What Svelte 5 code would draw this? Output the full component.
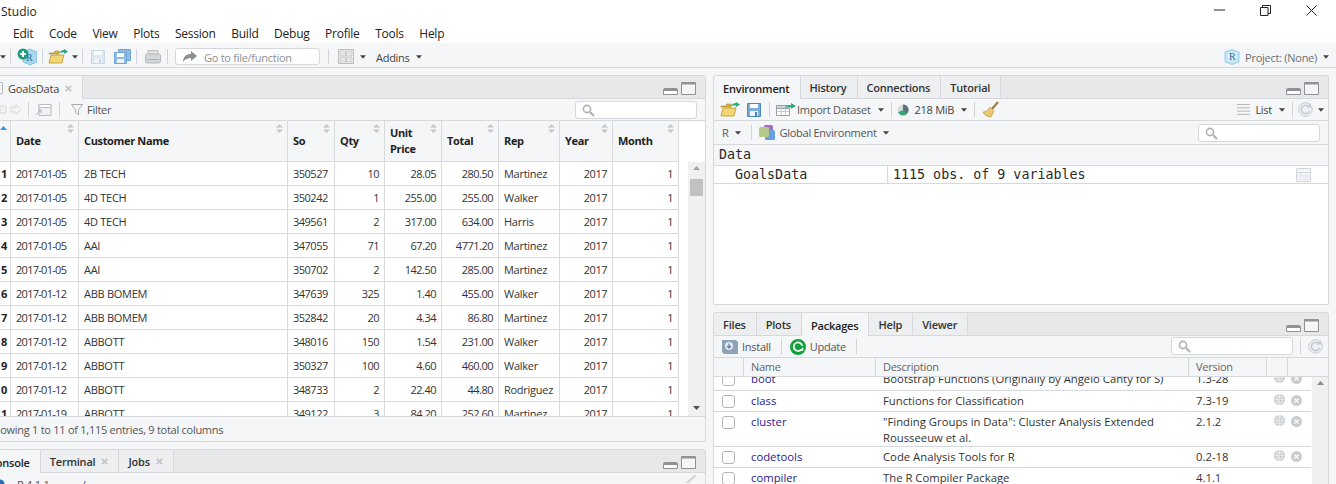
<script>
  const menus = ['Edit','Code','View','Plots','Session','Build','Debug','Profile','Tools','Help'];
  const cols = ['Date','Customer Name','So','Qty','Unit Price','Total','Rep','Year','Month'];
  const rows = [
    [1,'2017-01-05','2B TECH','350527','10','28.05','280.50','Martinez'],
    [2,'2017-01-05','4D TECH','350242','1','255.00','255.00','Walker'],
    [3,'2017-01-05','4D TECH','349561','2','317.00','634.00','Harris'],
    [4,'2017-01-05','AAI','347055','71','67.20','4771.20','Martinez'],
    [5,'2017-01-05','AAI','350702','2','142.50','285.00','Martinez'],
    [6,'2017-01-12','ABB BOMEM','347639','325','1.40','455.00','Walker'],
    [7,'2017-01-12','ABB BOMEM','352842','20','4.34','86.80','Martinez'],
    [8,'2017-01-12','ABBOTT','348016','150','1.54','231.00','Walker'],
    [9,'2017-01-12','ABBOTT','350327','100','4.60','460.00','Walker'],
    [10,'2017-01-12','ABBOTT','348733','2','22.40','44.80','Rodriguez'],
    [11,'2017-01-19','ABBOTT','349122','3','84.20','252.60','Martinez']
  ];
  const pkgs = [
    {n:'boot',d:['Bootstrap Functions (Originally by Angelo Canty for S)'],v:'1.3-28',k:'clip'},
    {n:'class',d:['Functions for Classification'],v:'7.3-19',k:''},
    {n:'cluster',d:['"Finding Groups in Data": Cluster Analysis Extended','Rousseeuw et al.'],v:'2.1.2',k:'tall'},
    {n:'codetools',d:['Code Analysis Tools for R'],v:'0.2-18',k:''},
    {n:'compiler',d:['The R Compiler Package'],v:'4.1.1',k:'noicons'}
  ];
</script>

{#snippet caret()}<svg class="caret" width="6" height="4" viewBox="0 0 7 4"><path d="M0 0h7L3.500 4z" fill="#444"/></svg>{/snippet}
{#snippet sep()}<span class="sep"></span>{/snippet}
{#snippet xicon()}<svg class="x" width="7" height="7" viewBox="0 0 7 7"><path d="M.8.800l5.400 5.400M6.200.800L.8 6.200" stroke="#c2c5c8" stroke-width="1.700"/></svg>{/snippet}
{#snippet openIcon()}
  <svg width="20" height="15" viewBox="0 0 20 15"><path d="M1 4h5l1-2h4v3H1z" fill="#d9b44a" stroke="#b08f30" stroke-width=".7"/><path d="M1 14l2-8h13l-2 8z" fill="#f3d777" stroke="#b9952f" stroke-width=".8"/><path d="M11 4c1-2 3-3 5-3V0l4 2.500L16 5V3.500c-2 0-4 0-5 .5z" fill="#2fa87c"/></svg>
{/snippet}
{#snippet saveIcon(c, s)}
  <svg width="14" height="14" viewBox="0 0 14 14"><path d="M.5.500h13v13H.5z" fill={c} stroke={s}/><path d="M3 1h8v4H3z" fill="#fff"/><path d="M3 8h8v5H3z" fill="#eef3f8"/><path d="M8 9h2v4H8z" fill={s}/></svg>
{/snippet}
{#snippet search()}
  <svg class="mag" width="13" height="13" viewBox="0 0 13 13"><circle cx="5" cy="5" r="3.600" fill="none" stroke="#aeb2b5" stroke-width="1.600"/><path d="M8 8l4 4" stroke="#aeb2b5" stroke-width="2.200"/></svg>
{/snippet}
{#snippet paneBtns()}
  <div class="panebtns">
    <svg width="33" height="13" viewBox="0 0 33 13"><path d="M.5 7.500c0-.7.500-1 1-1h12c.5 0 1 .3 1 1v5H.5z" fill="#fff" stroke="#8e9296"/><path d="M1 7h13v2H1z" fill="#8e9296"/><path d="M18.500.5h14v12h-14z" fill="#f4f6f8" stroke="#8e9296"/><path d="M19 1h13v1.500H19z" fill="#8e9296"/></svg>
  </div>
{/snippet}
{#snippet refresh()}
  <svg width="15" height="15" viewBox="0 0 15 15"><circle cx="7.500" cy="7.500" r="6.800" fill="#eef1f5" stroke="#c3cad3"/><path d="M11 5A4.200 4.200 0 1 0 11.500 9" fill="none" stroke="#c3cad3" stroke-width="1.600"/><path d="M8.500 5.500h4.500V1z" fill="#c3cad3"/></svg>
{/snippet}
{#snippet sortIcon()}
  <svg class="sort" width="7" height="9" viewBox="0 0 7 9"><path d="M3.500 0L7 3.500H0zM3.500 9L0 5.500h7z" fill="#c4c6c8"/></svg>
{/snippet}
{#snippet rcube(sz)}
  <svg width={sz} height={sz} viewBox="0 0 16 16"><path d="M1 3l7-2.500L15 3v10l-7 2.500L1 13z" fill="#bfe3f3" stroke="#8fc8e4" stroke-width=".8"/><path d="M3.500 3.500h9v8.500h-9z" fill="#d9f0fa"/><text x="5" y="11" class="cube-r">R</text></svg>
{/snippet}

<div class="app">
  <div class="title">
    <span class="tname">Studio</span>
    <div class="winbtns">
      <svg width="11" height="2" viewBox="0 0 11 2"><path d="M0 1h11" stroke="#222"/></svg>
      <svg width="11" height="11" viewBox="0 0 11 11"><path d="M.5 2.500h7.500v8H.5zM2.500 2.500V.5h8v8H8" fill="none" stroke="#222"/></svg>
      <svg width="11" height="11" viewBox="0 0 11 11"><path d="M.5.500l10 10M10.500.500l-10 10" stroke="#222"/></svg>
    </div>
  </div>
  <nav class="menu">{#each menus as m}<span>{m}</span>{/each}</nav>

  <div class="maintb">
    <span class="tb-lead">{@render caret()}</span>
    {@render sep()}
    <svg class="i-new" width="20" height="18" viewBox="0 0 20 18"><path d="M6 4l7-3 7 3v10l-7 3-7-3z" fill="#a9d8ee" stroke="#6fb5d6" stroke-width=".7"/><text x="9" y="13" class="cube-r">R</text><circle cx="6" cy="6" r="5.500" fill="#1f9c7f"/><path d="M6 3v6M3 6h6" stroke="#fff" stroke-width="2"/></svg>
    {@render sep()}
    <span class="i-open">{@render openIcon()}</span>
    {@render caret()}
    {@render sep()}
    <span class="i-save">{@render saveIcon('#dce8f2','#c6d9e9')}</span>
    <svg class="i-saveall" width="17" height="15" viewBox="0 0 17 15"><path d="M4.500.500h12v11h-12z" fill="#8dbbe4" stroke="#6ea6d8"/><path d="M.5 3.500h12v11H.5z" fill="#8dbbe4" stroke="#6ea6d8"/><path d="M3 4h7v4H3z" fill="#fff"/><path d="M3 10h7v4H3z" fill="#eef3f8"/></svg>
    {@render sep()}
    <svg class="i-print" width="16" height="14" viewBox="0 0 16 14"><path d="M3 .5h10v5H3z" fill="#e8e0cf" stroke="#bfc3c7"/><path d="M.5 5.500c0-1 1-1.500 2-1.500h11c1 0 2 .5 2 1.500v6c0 1-1 1.500-2 1.500h-11c-1 0-2-.5-2-1.500z" fill="#d3d7db" stroke="#b5b9bd"/><path d="M2 9h12v1H2z" fill="#aeb2b6"/></svg>
    {@render sep()}
    <div class="goto">
      <svg width="14" height="11" viewBox="0 0 14 11"><path d="M8 0l6 5-6 5V7C5 7 2 8 0 11c0-5 3-8 8-8z" fill="#8a8f94"/></svg>
      <span>Go to file/function</span>
    </div>
    {@render sep()}
    <svg class="i-grid" width="16" height="15" viewBox="0 0 16 15"><path d="M.5.500h15v14H.5z" fill="#f4f6f8" stroke="#b9bcbf"/><path d="M2 2h5.500v5H2zM8.500 2H14v5H8.500zM2 8h5.500v5H2zM8.500 8H14v5H8.500z" fill="#e4e6e8" stroke="#b9bcbf" stroke-width=".6"/></svg>
    <span class="grid-caret">{@render caret()}</span>
    <span class="addins">Addins</span>
    {@render caret()}
    <div class="project">
      {@render rcube(16)}
      <span>Project: (None)</span>
      {@render caret()}
    </div>
  </div>

  <div class="workspace">
    <div class="leftcol">
      <section class="pane editor">
        <div class="tabs">
          <div class="tab active first">
            <svg class="doc" width="9" height="12" viewBox="0 0 9 12"><path d="M.5.500h8v11h-8z" fill="#fff" stroke="#b9bcbf"/><path d="M1 4h7M1 7h7M4 1v10" stroke="#c9ccd0" stroke-width=".7"/></svg>
            <span class="tabname">GoalsData</span>
            {@render xicon()}
          </div>
          {@render paneBtns()}
        </div>
        <div class="toolbar tb-view">
          <svg class="arrows" width="21" height="11" viewBox="0 0 21 11"><path d="M0 2h6v7H0zM11 3h5V.5L21 5.500 16 10.500V8h-5z" fill="#f2f4f6" stroke="#d5d8da"/></svg>
          {@render sep()}
          <svg class="pop" width="16" height="12" viewBox="0 0 16 12"><path d="M3 .5h12v11H3z" fill="#eef2f6" stroke="#b9bcbf"/><path d="M3 .5h12v3H3z" fill="#fff" stroke="#b9bcbf"/><path d="M0 11l5-5M2 6h3v3" fill="none" stroke="#aeb2b5"/></svg>
          {@render sep()}
          <svg class="funnel" width="12" height="11" viewBox="0 0 12 11"><path d="M.5.500h11L7.500 5.500v5l-3-2v-3z" fill="none" stroke="#a8acb0"/></svg>
          <span class="filter">Filter</span>
          <div class="searchbox sb-view">{@render search()}</div>
        </div>
        <div class="tablewrap">
          <div class="tablemain">
            <div class="grid-row head">
              <div class="cell idx"><svg width="7" height="4" viewBox="0 0 7 4" class="asc"><path d="M3.500 0L7 4H0z" fill="#2d9be8"/></svg></div>
              {#each cols as c}
                <div class="cell hcell"><span>{c}</span>{@render sortIcon()}</div>
              {/each}
            </div>
            {#each rows as r}
              <div class="grid-row body">
                <div class="cell idx">{r[0]}</div>
                <div class="cell dt">{r[1]}</div>
                <div class="cell">{r[2]}</div>
                <div class="cell digits">{r[3]}</div>
                <div class="cell num">{r[4]}</div>
                <div class="cell num">{r[5]}</div>
                <div class="cell num">{r[6]}</div>
                <div class="cell">{r[7]}</div>
                <div class="cell num">2017</div>
                <div class="cell num">1</div>
              </div>
            {/each}
          </div>
          <div class="vscroll">
            <svg width="7" height="4" viewBox="0 0 7 4"><path d="M3.500 0L7 4H0z" fill="#a3a3a3"/></svg>
            <span class="thumb"></span>
            <svg class="down" width="7" height="4" viewBox="0 0 7 4"><path d="M0 0h7L3.500 4z" fill="#505050"/></svg>
          </div>
        </div>
        <div class="statusbar">Showing 1 to 11 of 1,115 entries, 9 total columns</div>
      </section>

      <section class="pane console">
        <div class="tabs">
          <div class="tab active first con">Console</div>
          <div class="tab">Terminal {@render xicon()}</div>
          <div class="tab">Jobs {@render xicon()}</div>
          {@render paneBtns()}
        </div>
        <div class="conbar">
          <svg width="10" height="10" viewBox="0 0 10 10"><circle cx="5" cy="5" r="4.500" fill="#2a6fb5"/></svg>
          <span>R 4.1.1</span>
          <span class="conpath">· ~/</span>
          <svg class="conbroom" width="12" height="8" viewBox="0 0 12 8"><path d="M11 0L2 8" stroke="#d5d8da" stroke-width="2.500"/></svg>
        </div>
      </section>
    </div>

    <div class="rightcol">
      <section class="pane envp">
        <div class="tabs">
          <div class="tab active">Environment</div>
          <div class="tab">History</div>
          <div class="tab">Connections</div>
          <div class="tab">Tutorial</div>
          {@render paneBtns()}
        </div>
        <div class="toolbar envtb">
          {@render openIcon()}
          <span class="i-envsave">{@render saveIcon('#7cadd9','#4a86bf')}</span>
          {@render sep()}
          <svg class="i-import" width="20" height="13" viewBox="0 0 20 13"><path d="M.5 2.500h13v10H.5z" fill="#fff" stroke="#9aa0a6"/><path d="M.5 2.500h13v3H.5z" fill="#cfd4da" stroke="#9aa0a6"/><path d="M5 3v9M9.500 3v9M1 8.500h12" stroke="#b5bac0" stroke-width=".7"/><path d="M9 5c1-2 3-3 6-3V0l5 3-5 3V4c-2 0-4 0-6 1z" fill="#2fa87c"/></svg>
          <span>Import Dataset</span>
          {@render caret()}
          {@render sep()}
          <svg width="12" height="12" viewBox="0 0 12 12"><circle cx="6" cy="6" r="5.500" fill="#d8dbde"/><path d="M6 6V.5A5.500 5.500 0 0 1 9.500 10.300z" fill="#5c6d7a"/><path d="M6 6l3.500 4.300A5.500 5.500 0 0 1 1 8.300z" fill="#39a678"/></svg>
          <span class="mib">218 MiB</span>
          {@render caret()}
          {@render sep()}
          <svg class="i-broom" width="17" height="17" viewBox="0 0 17 17"><path d="M16 1l-6 7" stroke="#9c7a3c" stroke-width="2"/><path d="M8 6l4 4-3 6C6 16 2 14 1 11c3 0 5-2 7-5z" fill="#e6c872" stroke="#b39340" stroke-width=".6"/></svg>
          <div class="push">
            <svg width="13" height="11" viewBox="0 0 13 11"><path d="M0 .5h13M0 3.800h13M0 7.100h13M0 10.400h13" stroke="#b5b9bd"/></svg>
            <span class="listlbl">List</span>
            {@render caret()}
            {@render sep()}
            {@render refresh()}
            {@render caret()}
          </div>
        </div>
        <div class="toolbar envtb2">
          <span>R</span>
          {@render caret()}
          {@render sep()}
          <svg class="i-genv" width="16" height="15" viewBox="0 0 16 15"><rect x="5" y="0" width="9" height="9" rx="1.500" fill="#a86cc4"/><rect x="6" y="5" width="10" height="10" rx="1.500" fill="#6b9fe0"/><rect x="0" y="2" width="10" height="10" rx="1.500" fill="#b5c98a"/></svg>
          <span class="genv">Global Environment</span>
          {@render caret()}
          <div class="searchbox sb-env">{@render search()}</div>
        </div>
        <div class="mono datahead">Data</div>
        <div class="datarow mono">
          <span class="dname">GoalsData</span>
          <span class="dval">1115 obs. of 9 variables</span>
          <svg width="15" height="14" viewBox="0 0 15 14"><path d="M1 .5h13c.3 0 .5.200.5.500v12c0 .3-.2.500-.5.500H1c-.3 0-.5-.2-.5-.500V1C.5.700.700.500 1 .500z" fill="#f4f6f8" stroke="#cfd5da"/><path d="M1 4h13v1H1z" fill="#cfd5da"/><path d="M.5 8h14M.5 11h14M5 4v10M10 4v10" stroke="#dde1e5" stroke-width=".7"/></svg>
        </div>
        <div class="whitefill"></div>
      </section>

      <section class="pane pkgp">
        <div class="tabs">
          <div class="tab">Files</div>
          <div class="tab">Plots</div>
          <div class="tab active">Packages</div>
          <div class="tab">Help</div>
          <div class="tab">Viewer</div>
          {@render paneBtns()}
        </div>
        <div class="toolbar pkgtb">
          <svg width="16" height="15" viewBox="0 0 16 15"><path d="M0 1h14l2 2v12H2l-2-2z" fill="#8da3b8"/><circle cx="7" cy="7" r="4" fill="#e5ecf2"/><path d="M7 4.500v4M5 7l2 2 2-2" fill="none" stroke="#6d8297" stroke-width="1.300"/></svg>
          <span class="pi">Install</span>
          {@render sep()}
          <svg width="16" height="16" viewBox="0 0 15 15"><circle cx="7.500" cy="7.500" r="7.500" fill="#11a13a"/><path d="M10.500 10A4 4 0 1 1 11.500 6.500" fill="none" stroke="#fff" stroke-width="1.600"/><path d="M9 11h3.500V7.500z" fill="#fff"/></svg>
          <span class="pu">Update</span>
          {@render sep()}
          <div class="pkgright">
            <div class="searchbox sb-pkg">{@render search()}</div>
            {@render sep()}
            {@render refresh()}
          </div>
        </div>
        <div class="phead">
          <span></span><span>Name</span><span>Description</span><span>Version</span><span></span><span></span>
        </div>
        <div class="pbody">
          <div class="plist">
            {#each pkgs as p}
              <div class={['prow', p.k]}>
                <span class="chk"></span>
                <span class="pname">{p.n}</span>
                <span class="pdesc">{#each p.d as l}<span>{l}</span>{/each}</span>
                <span class="pver">{p.v}</span>
                {#if p.k !== 'noicons'}
                  <svg class="globe" width="11" height="11" viewBox="0 0 11 11"><circle cx="5.500" cy="5.500" r="5.500" fill="#c9cccf"/><path d="M0 5.500h11M1 3h9M1 8h9M5.500 0v11M5.500 0C2 3 2 8 5.500 11M5.500 0C9 3 9 8 5.500 11" stroke="#f4f6f8" stroke-width=".6" fill="none"/></svg>
                  <svg class="rm" width="11" height="11" viewBox="0 0 11 11"><circle cx="5.500" cy="5.500" r="5.500" fill="#c9cccf"/><path d="M3.500 3.500l4 4M7.500 3.500l-4 4" stroke="#f8f9fa" stroke-width="1.300"/></svg>
                {/if}
              </div>
            {/each}
          </div>
          <div class="pscroll"><svg width="7" height="4" viewBox="0 0 7 4"><path d="M3.500 0L7 4H0z" fill="#8a8a8a"/></svg></div>
        </div>
      </section>
    </div>
  </div>
</div>

<style>
  :global(body) { margin: 0; overflow: hidden; }
  .app {
    width: 1336px; height: 484px; overflow: hidden; background: #f4f6f8;
    font-family: "Open Sans", "Noto Sans", sans-serif; font-size: 11px; color: #333; letter-spacing: -0.27px;
  }
  .title { height: 22px; background: #fff; display: flex; align-items: center; justify-content: space-between; }
  .tname { font-size: 12px; color: #222; padding-left: 1px; letter-spacing: 0; }
  .winbtns { display: flex; align-items: center; gap: 35px; padding-right: 19px; margin-top: -2px; }
  .menu { height: 21px; padding-top: 1px; box-sizing: border-box; background: #fff; display: flex; align-items: center; gap: 15.600px; padding-left: 13px; font-size: 12px; letter-spacing: -0.25px; color: #222; }

  .maintb { height: 25px; padding-top: 3px; box-sizing: border-box; background: #f4f6f8; border-bottom: 1px solid #d6d9dc; display: flex; align-items: center; color: #555; }
  .tb-lead { display: flex; width: 10px; }
  .sep { display: inline-block; width: 1px; height: 15px; background: #d0d4d8; flex: none; }
  .caret { flex: none; }
  .i-new { margin: 0 5px 0 6px; }
  .i-open { margin-left: 5px; margin-right: 4px; display: flex; }
  .maintb .caret { margin-right: 4px; }
  .i-save { margin: 0 9px 0 8px; display: flex; }
  .i-saveall { margin-right: 5px; }
  .i-print { margin: 0 6px 0 8px; }
  .goto {
    width: 145px; height: 17px; box-sizing: border-box; margin: 0 8px 0 7px; background: #fff;
    border: 1px solid #d6d9dc; border-radius: 3px; display: flex; align-items: center; gap: 7px; padding-left: 7px; color: #8d8f91;
  }
  .goto span, .addins, .project span { margin-top: 1px; }
  .i-grid { margin: 0 6px 0 9px; }
  .grid-caret { display: flex; margin-right: 6px; }
  .addins { margin-right: 6px; color: #444; }
  .project { margin-left: auto; display: flex; align-items: center; gap: 5px; padding-right: 7px; color: #6c6f72; }
  .project .caret { margin: 0 0 0 1px; }

  .workspace { display: flex; padding-top: 7px; height: 416px; box-sizing: border-box; }
  .leftcol { width: 724px; margin-left: -18px; flex: none; display: flex; flex-direction: column; gap: 7px; }
  .rightcol { width: 616px; margin-left: 7px; flex: none; display: flex; flex-direction: column; gap: 7px; }
  .pane { border: 1px solid #d6d9dc; border-radius: 3px 3px 0 0; box-sizing: border-box; background: #f4f6f8; overflow: hidden; }
  .editor { height: 367px; flex: none; }
  .console { flex: 1; border-bottom: 0; }
  .envp { height: 230px; flex: none; }
  .pkgp { flex: 1; border-bottom: 0; }

  .tabs { height: 22px; background: #e6e8ea; border-bottom: 1px solid #d6d9dc; display: flex; position: relative; }
  .tab {
    display: flex; align-items: center; gap: 4px; font-weight: 600; padding: 1px 10px 0 9px; color: #333; letter-spacing: -0.2px;
    border-right: 1px solid #d6d9dc; background: #eceef0;
  }
  .tab.active { background: #f4f6f8; margin-bottom: -1px; color: #222; }
  .first { padding-left: 11px; }
  .first .doc { margin-right: 1px; }
  .tabname { font-weight: 400; color: #444; }
  .x { flex: none; margin-left: 2px; }
  .panebtns { position: absolute; right: 9px; top: 6px; display: flex; }

  .toolbar { display: flex; align-items: center; color: #555; background: #f4f6f8; border-bottom: 1px solid #d6d9dc; box-sizing: border-box; }
  .tb-view { height: 22px; padding-left: 17px; position: relative; }
  .arrows { margin-right: 7px; }
  .pop { margin: 0 7px; }
  .funnel { margin-left: 11px; }
  .filter { margin-left: 4px; }
  .searchbox { background: #fff; border: 1px solid #d6d9dc; border-radius: 3px; box-sizing: border-box; height: 18px; width: 122px; display: flex; align-items: center; padding-left: 6px; }
  .sb-view { position: absolute; right: 8px; top: 2px; }

  .tablewrap { display: flex; height: 296px; background: #fff; overflow: hidden; border-bottom: 1px solid #d6d9dc; box-sizing: border-box; }
  .tablemain { width: 696px; flex: none; }
  .grid-row { display: grid; grid-template-columns: 28px 68px 209px 47px 50px 57px 57px 61px 53px 66px; }
  .cell { border-right: 1px solid #d8dadc; border-bottom: 1px solid #d8dadc; padding: 0 5px; box-sizing: border-box; display: flex; align-items: center; min-width: 0; white-space: nowrap; }
  .digits, .num { letter-spacing: -0.5px; }
  .dt { letter-spacing: -0.72px; }
  .head { height: 41px; background: #f4f6f8; }
  .body { height: 24px; }
  .hcell { font-weight: 700; color: #222; position: relative; white-space: normal; line-height: 16px; padding-right: 14px; letter-spacing: -0.35px; }
  .sort { position: absolute; right: 4px; top: 3px; }
  .idx { padding: 0 3px 0 0; justify-content: flex-end; font-weight: 700; color: #222; }
  .head .idx { align-items: flex-start; padding-top: 5px; }
  .asc { display: block; }
  .num { justify-content: flex-end; }
  .vscroll { margin: 41px 0 0 9px; width: 17px; background: #f0f0f0; display: flex; flex-direction: column; align-items: center; padding-top: 4px; box-sizing: border-box; }
  .thumb { width: 13px; height: 17px; background: #c1c1c1; margin-top: 9px; }
  .down { margin-top: auto; margin-bottom: 6px; }
  .statusbar { height: 24px; padding-left: 5px; display: flex; align-items: center; color: #555; }

  .con { padding-left: 6px; }
  .conbar { height: 24px; display: flex; padding: 4px 0 0 12px; align-items: flex-start; color: #555; box-sizing: border-box; position: relative; white-space: nowrap; }
  .conbar svg:first-child { margin-top: 2px; margin-right: 12px; }
  .conpath { margin-left: 21px; }
  .conbroom { position: absolute; right: 8px; top: 2px; }

  .envtb { height: 22px; padding: 0 4px 0 6px; gap: 5px; }
  .envtb .caret { margin: 0 2px; }
  .i-envsave { display: flex; margin: 0 3px 0 2px; }
  .i-import { margin: 0 -4px 0 1px; }
  .mib { margin-left: 1px; color: #444; }
  .i-broom { margin-left: 2px; }
  .push { margin-left: auto; display: flex; align-items: center; gap: 5px; }
  .push .caret:last-child { margin: 0; }
  .listlbl { color: #444; }
  .envtb2 { height: 24px; padding-left: 8px; gap: 5px; position: relative; }
  .i-genv { margin-left: 2px; }
  .envtb2 .caret { margin: 0 5px 0 1px; }
  .sb-env { position: absolute; right: 8px; top: 3px; }
  .mono { font-family: "DejaVu Sans Mono", monospace; font-size: 13.330px; letter-spacing: 0; color: #2a2a2a; }
  .datahead { height: 21px; padding: 0 0 2px 5px; display: flex; align-items: center; border-bottom: 1px solid #d6d9dc; box-sizing: border-box; }
  .datarow { height: 18px; background: #fff; border-bottom: 1px solid #d6d9dc; box-sizing: border-box; display: flex; align-items: center; }
  .dname { width: 174px; padding-left: 21px; box-sizing: border-box; border-right: 1px solid #d6d9dc; height: 100%; display: flex; align-items: center; }
  .dval { padding-left: 5px; flex: 1; }
  .datarow svg { margin-right: 17px; }
  .whitefill { height: 120px; background: #fff; }

  .pkgtb { height: 22px; padding-left: 8px; position: relative; }
  .pi { margin: 0 10px 0 4px; }
  .pu { margin: 0 10px 0 4px; }
  .pkgtb > .sep + svg { margin-left: 8px; }
  .pkgright { position: absolute; right: 5px; top: 1px; display: flex; align-items: center; gap: 7px; }
  .phead { height: 19px; display: grid; grid-template-columns: 30px 132px 313px 78px 21px 1fr; border-bottom: 1px solid #d6d9dc; box-sizing: border-box; color: #666; }
  .phead span { border-right: 1px solid #d6d9dc; padding: 0 0 2px 7px; display: flex; align-items: center; }
  .phead span:last-child { border-right: 0; }
  .pbody { display: flex; background: #fff; height: 110px; overflow: hidden; }
  .plist { width: 597px; flex: none; font-size: 11.300px; letter-spacing: 0; }
  .prow { height: 21px; display: grid; grid-template-columns: 30px 132px 313px 78px 20px 1fr; border-bottom: 1px solid #d6d9dc; align-items: start; box-sizing: border-box; padding-top: 2px; }
  .prow.clip { height: 22px; margin-top: -8px; }
  .prow.tall { height: 35px; }
  .prow > span { padding-left: 7px; white-space: nowrap; }
  .prow .chk { width: 13px; height: 13px; border: 1px solid #b5b8bb; border-radius: 3px; box-sizing: border-box; margin: 2px 0 0 8px; padding: 0; background: #fff; }
  .pname { color: #2a2193; line-height: 16px; }
  .pdesc { display: flex; flex-direction: column; line-height: 16px; color: #333; }
  .pver { color: #333; line-height: 16px; }
  .globe { margin: 1px 0 0 7px; }
  .rm { margin: 2px 0 0 4px; }
  .pscroll { width: 17px; flex: none; background: #f0f0f0; display: flex; justify-content: center; padding-top: 4px; align-items: flex-start; margin-left: 1px; }
  .cube-r { font-family: "Liberation Serif", serif; font-size: 10px; letter-spacing: 0; fill: #2e6b95; }
</style>
